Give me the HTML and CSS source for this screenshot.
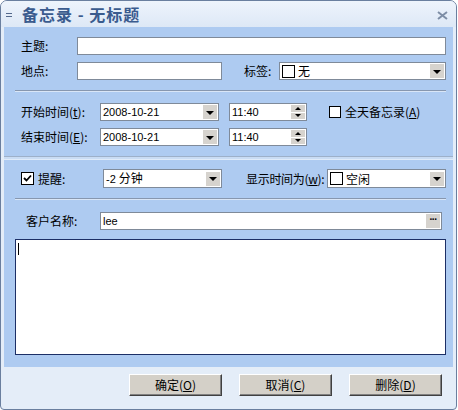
FILE: index.html
```html
<!DOCTYPE html>
<html>
<head>
<meta charset="utf-8">
<link rel="stylesheet" href="styles.css">
</head>
<body>
<div class="window">
  <div class="titlebar">
    <span class="sysicon"></span>
    <span class="title">备忘录 - 无标题</span>
    <span class="close">
      <svg width="11" height="9" viewBox="0 0 11 9"><path d="M1 1 L10 8 M10 1 L1 8" stroke="#7e8ea6" stroke-width="2"/></svg>
    </span>
  </div>
  <div class="content">
    <div class="row r1">
      <span class="label l-subject">主题:</span>
      <span class="field w-subject"></span>
    </div>
    <div class="row r2">
      <span class="label l-subject">地点:</span>
      <span class="field w-place"></span>
      <span class="label l-tag">标签:</span>
      <span class="field combo w-tag"><span class="swatch"></span><span class="ctext cjk">无</span><span class="arrow"><i></i></span></span>
    </div>
    <div class="sep s1"></div>

    <div class="row r3">
      <span class="label l-time">开始时间(<u>t</u>):</span>
      <span class="field combo w-date"><span class="ctext">2008-10-21</span><span class="arrow"><i></i></span></span>
      <span class="field spin w-spin"><span class="ctext">11:40</span><span class="spinbtn"><b class="up"></b><b class="down"></b></span></span>
      <span class="check"></span>
      <span class="label">全天备忘录(<u>A</u>)</span>
    </div>
    <div class="row r4">
      <span class="label l-time">结束时间(<u>E</u>):</span>
      <span class="field combo w-date"><span class="ctext">2008-10-21</span><span class="arrow"><i></i></span></span>
      <span class="field spin w-spin"><span class="ctext">11:40</span><span class="spinbtn"><b class="up"></b><b class="down"></b></span></span>
    </div>
    <div class="splitter"></div>

    <div class="row r5">
      <span class="check checked">
        <svg width="9" height="9" viewBox="0 0 9 9"><path d="M1 4 L3.5 6.5 L8 1.5" stroke="#000" stroke-width="1.8" fill="none"/></svg>
      </span>
      <span class="label l-remind">提醒:</span>
      <span class="field combo w-date"><span class="ctext">-2 <span class="cjk">分钟</span></span><span class="arrow"><i></i></span></span>
      <span class="label l-show">显示时间为(<u>w</u>):</span>
      <span class="field combo w-show"><span class="swatch"></span><span class="ctext cjk">空闲</span><span class="arrow"><i></i></span></span>
    </div>
    <div class="sep s2"></div>

    <div class="row r6">
      <span class="label l-client">客户名称:</span>
      <span class="field combo w-client"><span class="ctext">lee</span><span class="dots">···</span></span>
    </div>
    <div class="notes"><span class="caret"></span></div>
  </div>
  <div class="buttons">
    <span class="btn">确定(<u>O</u>)</span>
    <span class="btn">取消(<u>C</u>)</span>
    <span class="btn">删除(<u>D</u>)</span>
  </div>
</div>
</body>
</html>
```
FILE: styles.css
```css
html, body {
  margin: 0;
  padding: 0;
  background: #ffffff;
}
.window {
  width: 457px;
  height: 410px;
  box-sizing: border-box;
  border: 1px solid #6a7f9f;
  border-radius: 7px 7px 4px 4px;
  background: #e4edf8;
  display: flex;
  flex-direction: column;
  font-family: "Noto Sans CJK SC", "Liberation Sans", sans-serif;
  font-size: 12px;
  color: #000;
  overflow: hidden;
}
.titlebar {
  height: 26px;
  flex: none;
  display: flex;
  align-items: center;
  background: linear-gradient(#eef4fc, #dde8f6);
}
.sysicon {
  width: 6px;
  height: 4px;
  margin-left: 5px;
  margin-top: 2px;
  border-top: 1px solid #54698c;
  border-bottom: 1px solid #54698c;
  box-sizing: border-box;
}
.title {
  margin-left: 10px;
  font-size: 16px;
  font-weight: bold;
  color: #3a5b8e;
  letter-spacing: 1px;
  line-height: 20px;
}
.close {
  margin-left: auto;
  margin-right: 8px;
  margin-top: 3px;
  display: flex;
}
.content {
  margin: 0 3px;
  height: 340px;
  flex: none;
  background: #aecbf1;
  padding-top: 10px;
  box-sizing: border-box;
}
.row {
  display: flex;
  align-items: center;
  height: 18px;
}
.row > * { flex: none; min-width: 0; }
.r2 { margin-top: 7px; }
.r3 { margin-top: 11px; }
.r4 { margin-top: 7px; }
.r5 { margin-top: 9px; height: 19px; }
.r6 { margin-top: 12px; }
.label {
  white-space: nowrap;
  line-height: 18px;
}
.label u, .btn u {
  text-decoration: underline;
}
.l-subject { margin-left: 17px; width: 56px; }
.l-tag { margin-left: 22px; width: 35px; }
.l-time { margin-left: 17px; width: 79px; }
.l-remind { margin-left: 2px; width: 65px; }
.l-show { margin-left: 24px; width: 81px; letter-spacing: -0.3px; }
.l-client { margin-left: 22px; width: 74px; }

.field {
  box-sizing: border-box;
  height: 18px;
  background: #ffffff;
  border: 1px solid #7f8a99;
  display: flex;
  align-items: center;
  position: relative;
}
.r5 .field { height: 19px; }
.w-subject { width: 369px; }
.w-place { width: 145px; }
.w-tag { width: 167px; }
.w-date { width: 119px; }
.w-spin { width: 78px; margin-left: 10px; margin-right: 22px; }
.w-show { width: 119px; }
.w-client { width: 342px; }

.ctext {
  font-family: "Liberation Sans", "Noto Sans CJK SC", sans-serif;
  font-size: 11px;
  padding-left: 2px;
  line-height: 16px;
  white-space: nowrap;
}
.cjk {
  font-family: "Noto Sans CJK SC", sans-serif;
  font-size: 12px;
}
.swatch {
  width: 13px;
  height: 13px;
  box-sizing: border-box;
  border: 1px solid #000;
  margin-left: 2px;
  background: #fff;
}
.w-tag .ctext, .w-show .ctext { padding-left: 3px; }
.arrow {
  margin-left: auto;
  width: 14px;
  height: 14px;
  margin-right: 1px;
  background: #d6d3ce;
  display: flex;
  align-items: center;
  justify-content: center;
}
.arrow i {
  width: 0;
  height: 0;
  border-left: 4px solid transparent;
  border-right: 4px solid transparent;
  border-top: 4px solid #000;
  margin-top: 1px;
}
.spinbtn {
  margin-left: auto;
  margin-right: 1px;
  width: 14px;
  height: 14px;
  display: flex;
  flex-direction: column;
  gap: 1px;
}
.spinbtn b {
  flex: 1;
  background: #d6d3ce;
  display: flex;
  align-items: center;
  justify-content: center;
  position: relative;
}
.spinbtn b::after {
  content: "";
  width: 0;
  height: 0;
  border-left: 3px solid transparent;
  border-right: 3px solid transparent;
}
.spinbtn .up::after { border-bottom: 3px solid #000; }
.spinbtn .down::after { border-top: 3px solid #000; }
.dots {
  margin-left: auto;
  margin-right: 1px;
  width: 14px;
  height: 14px;
  background: #d6d3ce;
  font-family: "Liberation Sans", sans-serif;
  font-weight: bold;
  font-size: 10px;
  line-height: 12px;
  text-align: center;
  letter-spacing: -1px;
}
.check {
  width: 12px;
  height: 12px;
  box-sizing: border-box;
  border: 1px solid #000;
  background: #fff;
  margin-right: 4px;
  display: flex;
  align-items: center;
  justify-content: center;
}
.r5 .check { margin-left: 17px; width: 13px; height: 13px; margin-right: 2px; }

.sep {
  margin-left: 11px;
  width: 431px;
  height: 1px;
  background: #8797af;
  border-bottom: 1px solid #d9e6f7;
}
.s1 { margin-top: 10px; }
.s2 { margin-top: 10px; }
.splitter {
  margin-top: 10px;
  height: 4px;
  background: #c9dcf4;
  border-top: 1px solid #9db0c9;
  box-sizing: border-box;
  border-bottom: 1px solid #e0ebf9;
}
.notes {
  margin: 9px 0 0 11px;
  width: 431px;
  height: 116px;
  box-sizing: border-box;
  border: 1px solid #1c2f66;
  background: #fff;
  padding: 3px 0 0 2px;
}
.caret {
  display: block;
  width: 1px;
  height: 12px;
  background: #000;
}
.buttons {
  display: flex;
  padding-left: 128px;
  margin-top: 7px;
  gap: 17px;
}
.btn {
  width: 93px;
  height: 22px;
  box-sizing: border-box;
  background: #d4d0c8;
  border: 1px solid;
  border-color: #ffffff #404040 #404040 #ffffff;
  box-shadow: inset -1px -1px 0 #808080;
  text-align: center;
  line-height: 19px;
  font-size: 12px;
}
```
